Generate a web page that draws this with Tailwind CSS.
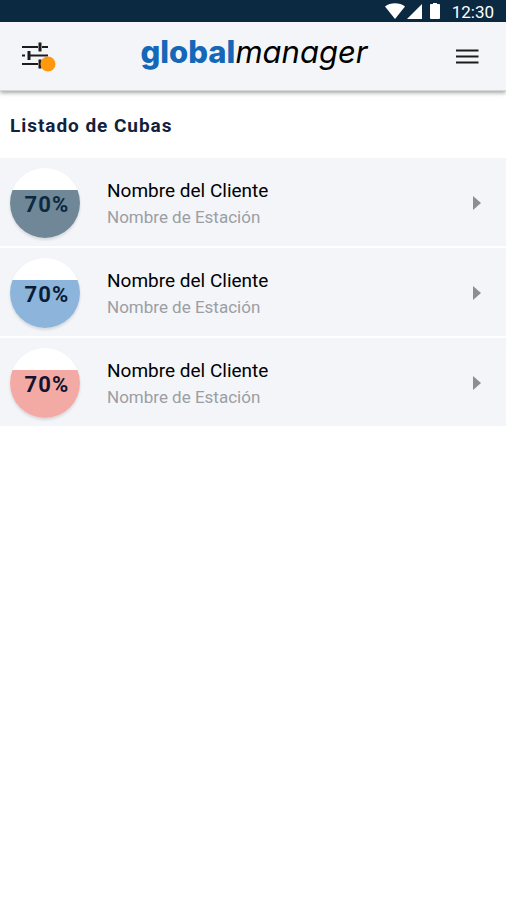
<!DOCTYPE html>
<html lang="es">
    <head>
        <meta charset="UTF-8">
        <meta name="viewport" content="width=device-width, initial-scale=1.0">
        <title>Global Manager | Listado de Cubas</title>
        <script src="https://cdn.jsdelivr.net/npm/@tailwindcss/browser@4"></script>
    </head>
    <body class="bg-white min-h-screen font-['Roboto',sans-serif] text-black">

        <!-- Status bar -->
        <div class="flex h-[22px] items-center justify-end bg-[#0b2a42] pr-3 text-white">
            <svg class="h-4 w-5" viewBox="0 0 20 16" fill="currentColor" aria-hidden="true">
                <path d="M0 3.5C5.5-.8 14.500-.8 20 3.500L10 16z" />
            </svg>
            <svg class="ml-0.5 h-4 w-[15px]" viewBox="0 0 15 16" fill="currentColor" aria-hidden="true">
                <path d="M15 1v15H0z" />
            </svg>
            <svg class="ml-2 h-4 w-[10px]" viewBox="0 0 10 16" fill="currentColor" aria-hidden="true">
                <path d="M3 0h4v1h2.200q.8 0 .8.800V15q0 1-1 1H1q-1 0-1-1V1.800Q0 1 .800 1H3z" />
            </svg>
            <span class="ml-3 pt-0.5 text-[17px] leading-5">12:30</span>
        </div>

        <!-- Header -->
        <header class="relative flex h-[69px] items-center justify-between border-b border-[#d5d7d9] bg-[#f3f5f9] px-5 shadow-[0_2px_4px_rgba(0,0,0,0.35)]">
            <button type="button" aria-label="Filtros">
                <svg class="h-8 w-9" viewBox="0 0 36 32" fill="none" stroke="#1c1c1c" aria-hidden="true">
                    <path d="M2 7h16m4 0h6M2 15.500h3m5 0h18M2 24h16" stroke-width="1.800" />
                    <path d="M20 2.500v9M9 11v9M20 19.500v9" stroke-width="3" />
                    <circle cx="28" cy="24" r="7.500" fill="#ff980c" stroke="none" />
                </svg>
            </button>
            <h1 class="pb-2 font-['Inter',sans-serif] text-[31px] leading-10"><span class="font-extrabold text-[#1468b7]">global</span><span class="italic">manager</span></h1>
            <button type="button" class="mr-1" aria-label="Menú">
                <svg class="h-6 w-[30px]" viewBox="0 0 30 24" stroke="#1c1c1c" stroke-width="2.200" aria-hidden="true">
                    <path d="M4 6.500h22.500M4 12.500h22.500M4 18.500h22.500" />
                </svg>
            </button>
        </header>

        <!-- Tank list -->
        <main>
            <h2 class="px-[10px] pt-[23px] pb-5 text-[19px] leading-6 font-bold tracking-wider text-[#14213d]">Listado de Cubas</h2>
            <ul class="flex flex-col gap-0.5">
                <li>
                    <a href="#" class="flex h-[88px] items-center bg-[#f3f5f9] pt-0.5 pr-[25px] pl-[10px]">
                        <span class="flex h-[70px] w-[70px] items-center justify-center rounded-full bg-linear-to-b from-white from-[32%] to-[#6f8796] to-[32%] pt-0.5 pl-1 text-[22px] font-bold tracking-wider text-[#0b2a42] shadow-[0_2px_3px_rgba(0,0,0,0.12)]">70%</span>
                        <span class="ml-[27px] flex flex-1 flex-col">
                            <span class="text-[19px] leading-7">Nombre del Cliente</span>
                            <span class="text-[17px] leading-6 text-[#9c9ea3]">Nombre de Estación</span>
                        </span>
                        <svg class="h-[14px] w-2" viewBox="0 0 8 14" fill="#8c8e92" aria-hidden="true"><path d="M0 0l8 7-8 7z" /></svg>
                    </a>
                </li>
                <li>
                    <a href="#" class="flex h-[88px] items-center bg-[#f3f5f9] pt-0.5 pr-[25px] pl-[10px]">
                        <span class="flex h-[70px] w-[70px] items-center justify-center rounded-full bg-linear-to-b from-white from-[32%] to-[#8db4da] to-[32%] pt-0.5 pl-1 text-[22px] font-bold tracking-wider text-[#0b1c38] shadow-[0_2px_3px_rgba(0,0,0,0.12)]">70%</span>
                        <span class="ml-[27px] flex flex-1 flex-col">
                            <span class="text-[19px] leading-7">Nombre del Cliente</span>
                            <span class="text-[17px] leading-6 text-[#9c9ea3]">Nombre de Estación</span>
                        </span>
                        <svg class="h-[14px] w-2" viewBox="0 0 8 14" fill="#8c8e92" aria-hidden="true"><path d="M0 0l8 7-8 7z" /></svg>
                    </a>
                </li>
                <li>
                    <a href="#" class="flex h-[88px] items-center bg-[#f3f5f9] pt-0.5 pr-[25px] pl-[10px]">
                        <span class="flex h-[70px] w-[70px] items-center justify-center rounded-full bg-linear-to-b from-white from-[32%] to-[#f3aaa5] to-[32%] pt-0.5 pl-1 text-[22px] font-bold tracking-wider text-[#14142f] shadow-[0_2px_3px_rgba(0,0,0,0.12)]">70%</span>
                        <span class="ml-[27px] flex flex-1 flex-col">
                            <span class="text-[19px] leading-7">Nombre del Cliente</span>
                            <span class="text-[17px] leading-6 text-[#9c9ea3]">Nombre de Estación</span>
                        </span>
                        <svg class="h-[14px] w-2" viewBox="0 0 8 14" fill="#8c8e92" aria-hidden="true"><path d="M0 0l8 7-8 7z" /></svg>
                    </a>
                </li>
            </ul>
        </main>
    </body>
</html>
